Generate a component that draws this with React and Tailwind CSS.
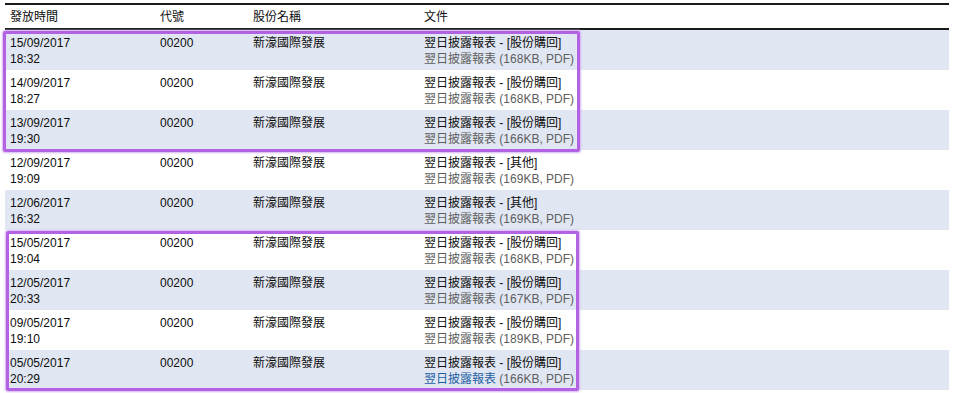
import React from 'react';

const rows = [
  { date: '15/09/2017', time: '18:32', type: '股份購回', size: '168KB' },
  { date: '14/09/2017', time: '18:27', type: '股份購回', size: '168KB' },
  { date: '13/09/2017', time: '19:30', type: '股份購回', size: '166KB' },
  { date: '12/09/2017', time: '19:09', type: '其他', size: '169KB' },
  { date: '12/06/2017', time: '16:32', type: '其他', size: '169KB' },
  { date: '15/05/2017', time: '19:04', type: '股份購回', size: '168KB' },
  { date: '12/05/2017', time: '20:33', type: '股份購回', size: '167KB' },
  { date: '09/05/2017', time: '19:10', type: '股份購回', size: '189KB' },
  { date: '05/05/2017', time: '20:29', type: '股份購回', size: '166KB', link: true },
];

function Row({ row, shaded }) {
  return (
    <div
      className={`grid grid-cols-[155px_93px_171px_1fr] h-[40px] pt-[5px] leading-[16px] ${
        shaded ? 'bg-[#e1e7f2]' : 'bg-white'
      }`}
    >
      <div className="pl-[5px]">
        <div>{row.date}</div>
        <div>{row.time}</div>
      </div>
      <div>00200</div>
      <div>新濠國際發展</div>
      <div>
        <div>翌日披露報表 - [{row.type}]</div>
        <div className="text-[#5e5e5e]">
          <span className={row.link ? 'text-[#1d5fa3]' : ''}>翌日披露報表</span> ({row.size}, PDF)
        </div>
      </div>
    </div>
  );
}

export default function App() {
  return (
    <div
      className="relative w-[954px] h-[393px] bg-white text-[12px] text-[#0d0d0d] overflow-hidden"
      style={{ fontFamily: '"Liberation Sans", Arial, "Noto Sans CJK TC", sans-serif' }}
    >
      <div className="ml-[5px] mt-[3px] w-[944px]">
        <div className="grid grid-cols-[155px_93px_171px_1fr] h-[27px] border-t-2 border-b-2 border-[#1a1a1a] items-center">
          <div className="pl-[5px]">發放時間</div>
          <div>代號</div>
          <div>股份名稱</div>
          <div>文件</div>
        </div>
        <div>
          {rows.map((row, i) => (
            <Row key={i} row={row} shaded={i % 2 === 0} />
          ))}
        </div>
      </div>

      {/* highlight boxes */}
      <div className="absolute left-[3px] top-[31px] w-[577px] h-[121px] border-[3px] border-[#b462e4] rounded-[2px] shadow-[0_0_2px_1px_#d5b3f2]" />
      <div className="absolute left-[6px] top-[231px] w-[573px] h-[160px] border-[3px] border-[#b462e4] rounded-[2px] shadow-[0_0_2px_1px_#d5b3f2]" />
    </div>
  );
}
